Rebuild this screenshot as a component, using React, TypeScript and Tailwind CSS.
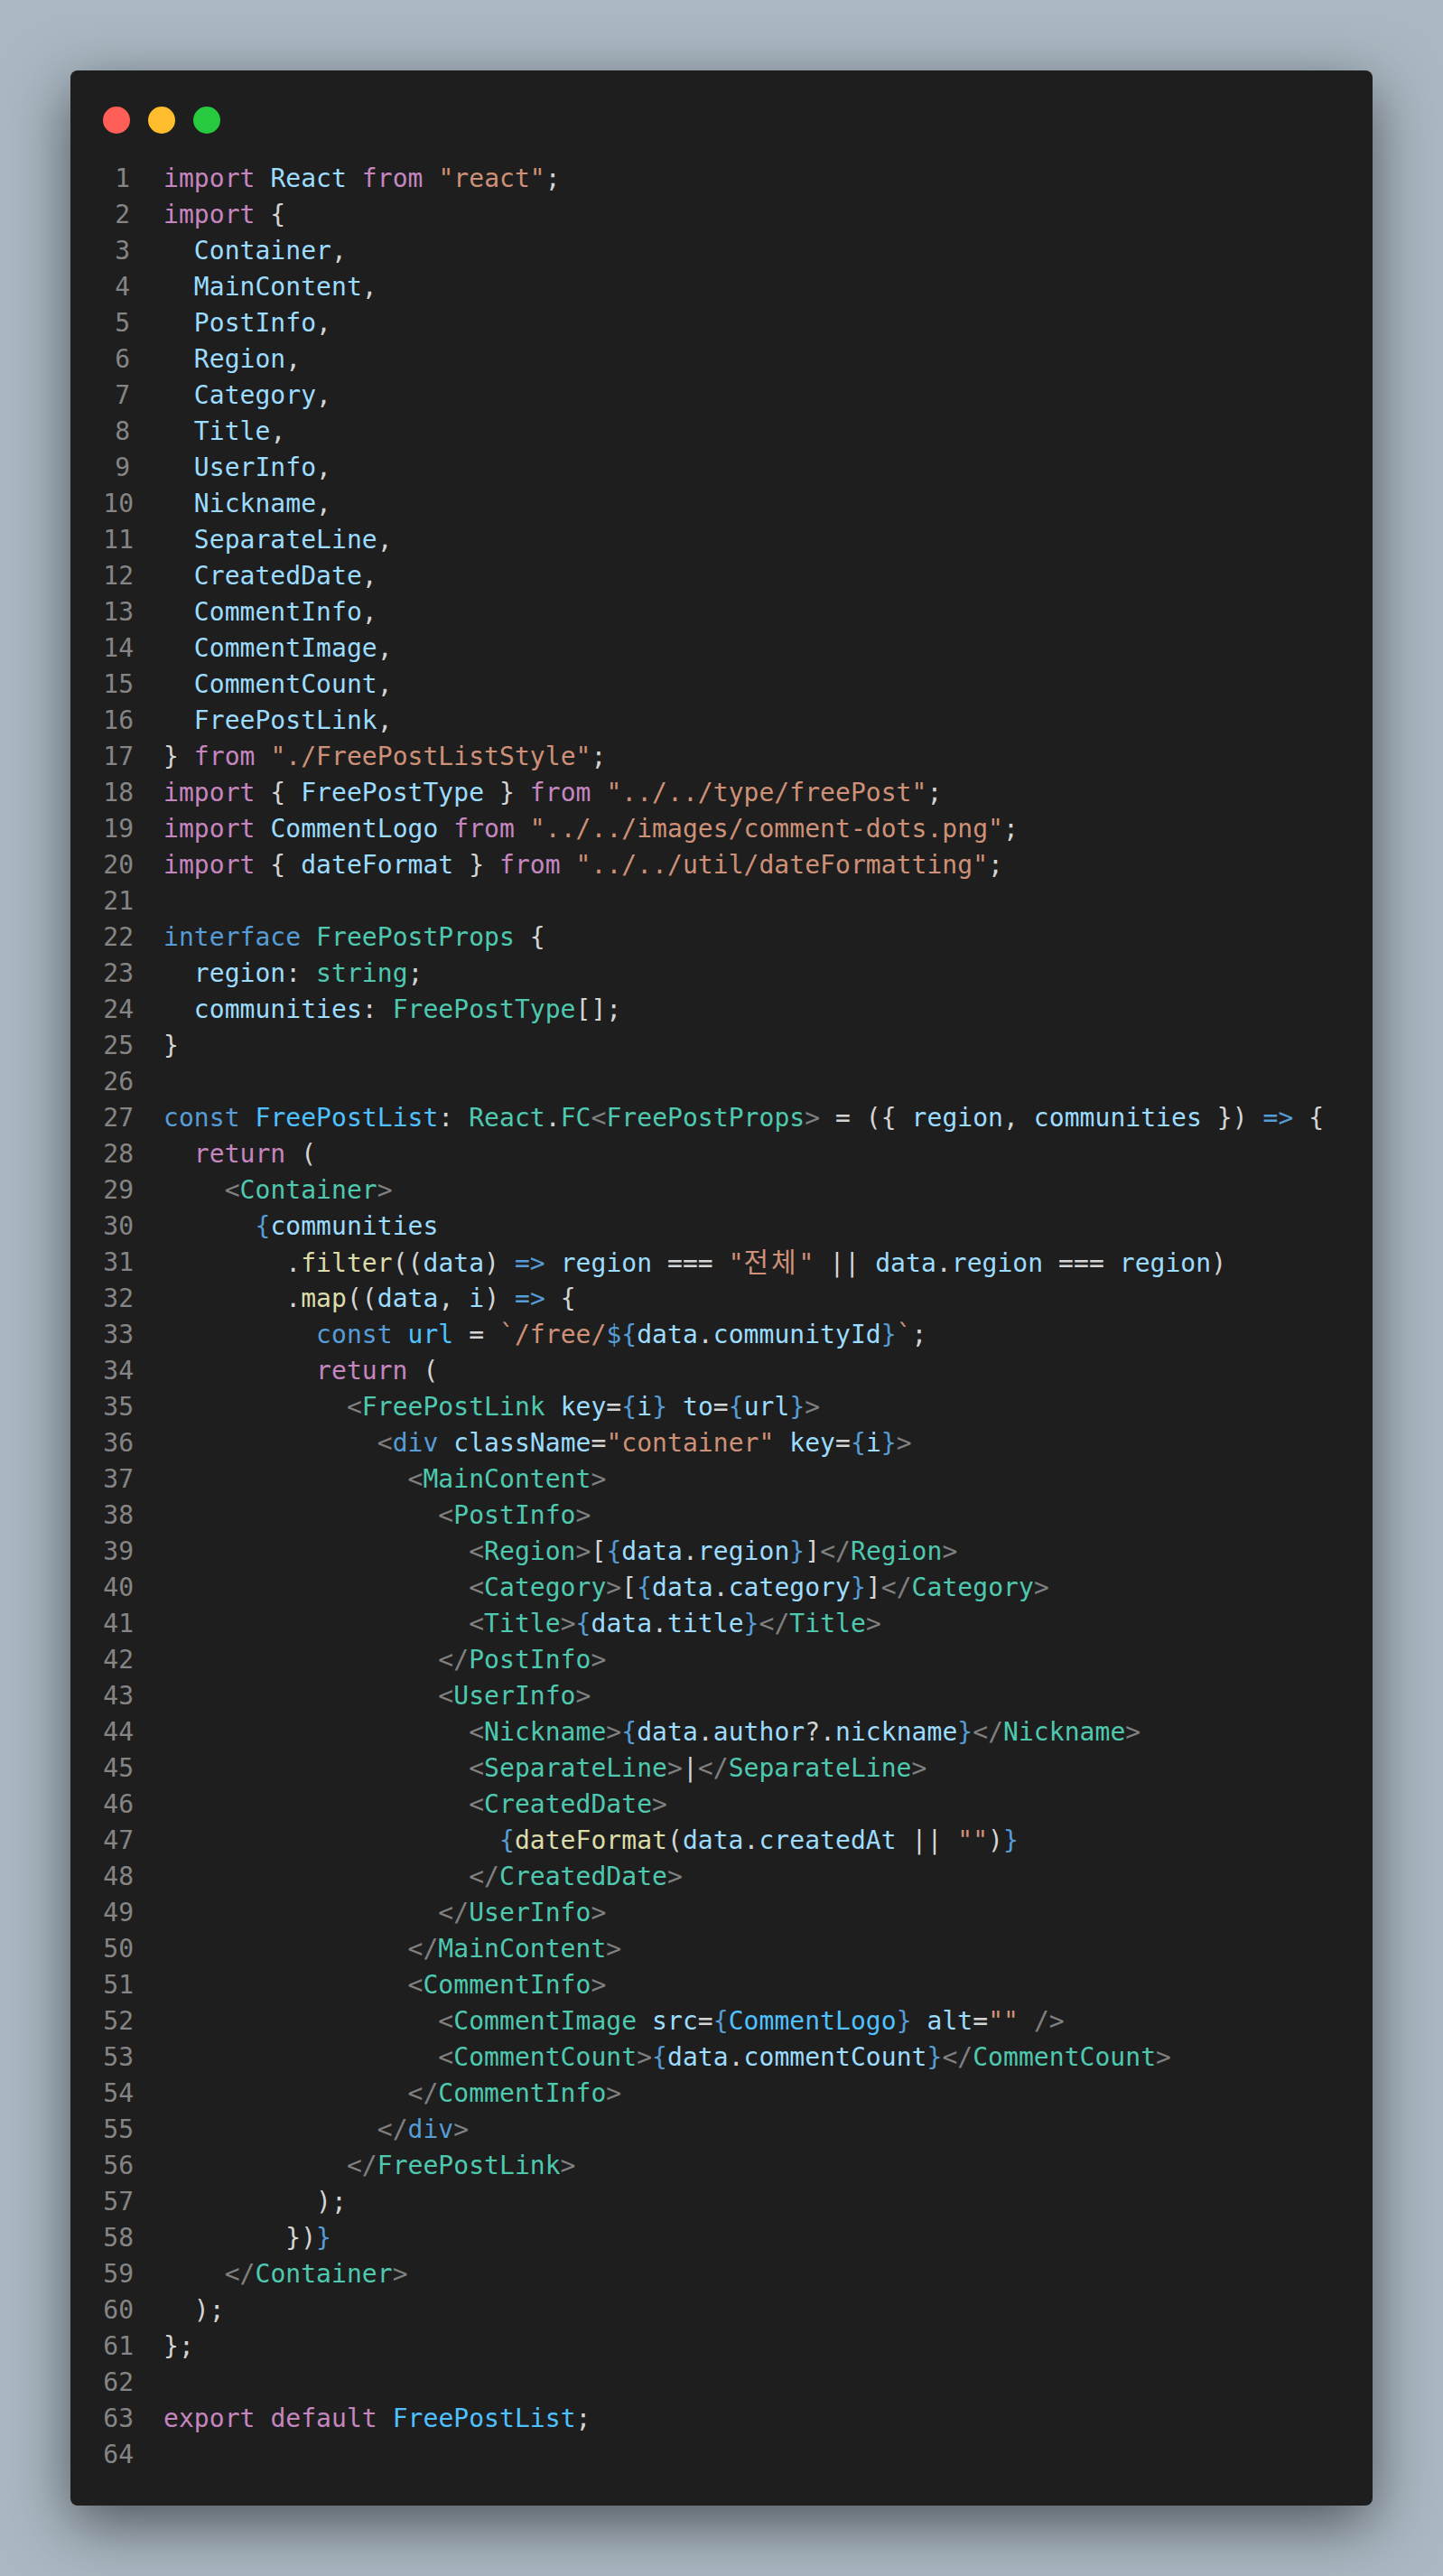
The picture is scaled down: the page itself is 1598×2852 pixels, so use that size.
import React from 'react';

type Tok = [keyof typeof colors, string];

const colors = {
  k: 'text-[#c586c0]',
  v: 'text-[#9cdcfe]',
  c: 'text-[#4fc1ff]',
  s: 'text-[#ce9178]',
  p: 'text-[#d4d4d4]',
  b: 'text-[#569cd6]',
  t: 'text-[#4ec9b0]',
  f: 'text-[#dcdcaa]',
  g: 'text-[#808080]',
  // hangul falls back to a wider face in the editor
  h: 'text-[#ce9178] text-[30px] tracking-[2.9px]',
};

// opening / closing jsx tags, the brackets are grey
const open = (name: string, kind: 'b' | 't' = 't'): Tok[] => [['g', '<'], [kind, name], ['g', '>']];
const close = (name: string, kind: 'b' | 't' = 't'): Tok[] => [['g', '</'], [kind, name], ['g', '>']];
const ind = (n: number): Tok => ['p', ' '.repeat(n)];
const field = (name: string): Tok[] => [ind(2), ['v', name], ['p', ',']];

const lines: Tok[][] = [
  [['k', 'import'], ['p', ' '], ['v', 'React'], ['p', ' '], ['k', 'from'], ['p', ' '], ['s', '"react"'], ['p', ';']],
  [['k', 'import'], ['p', ' {']],
  field('Container'),
  field('MainContent'),
  field('PostInfo'),
  field('Region'),
  field('Category'),
  field('Title'),
  field('UserInfo'),
  field('Nickname'),
  field('SeparateLine'),
  field('CreatedDate'),
  field('CommentInfo'),
  field('CommentImage'),
  field('CommentCount'),
  field('FreePostLink'),
  [['p', '} '], ['k', 'from'], ['p', ' '], ['s', '"./FreePostListStyle"'], ['p', ';']],
  [['k', 'import'], ['p', ' { '], ['v', 'FreePostType'], ['p', ' } '], ['k', 'from'], ['p', ' '], ['s', '"../../type/freePost"'], ['p', ';']],
  [['k', 'import'], ['p', ' '], ['v', 'CommentLogo'], ['p', ' '], ['k', 'from'], ['p', ' '], ['s', '"../../images/comment-dots.png"'], ['p', ';']],
  [['k', 'import'], ['p', ' { '], ['v', 'dateFormat'], ['p', ' } '], ['k', 'from'], ['p', ' '], ['s', '"../../util/dateFormatting"'], ['p', ';']],
  [],
  [['b', 'interface'], ['p', ' '], ['t', 'FreePostProps'], ['p', ' {']],
  [ind(2), ['v', 'region'], ['p', ': '], ['t', 'string'], ['p', ';']],
  [ind(2), ['v', 'communities'], ['p', ': '], ['t', 'FreePostType'], ['p', '[];']],
  [['p', '}']],
  [],
  [['b', 'const'], ['p', ' '], ['c', 'FreePostList'], ['p', ': '], ['t', 'React'], ['p', '.'], ['t', 'FC'], ['g', '<'], ['t', 'FreePostProps'], ['g', '>'], ['p', ' = ({ '], ['v', 'region'], ['p', ', '], ['v', 'communities'], ['p', ' }) '], ['b', '=>'], ['p', ' {']],
  [ind(2), ['k', 'return'], ['p', ' (']],
  [ind(4), ...open('Container')],
  [ind(6), ['b', '{'], ['v', 'communities']],
  [ind(8), ['p', '.'], ['f', 'filter'], ['p', '(('], ['v', 'data'], ['p', ') '], ['b', '=>'], ['p', ' '], ['v', 'region'], ['p', ' === '], ['s', '"'], ['h', '전체'], ['s', '"'], ['p', ' || '], ['v', 'data'], ['p', '.'], ['v', 'region'], ['p', ' === '], ['v', 'region'], ['p', ')']],
  [ind(8), ['p', '.'], ['f', 'map'], ['p', '(('], ['v', 'data'], ['p', ', '], ['v', 'i'], ['p', ') '], ['b', '=>'], ['p', ' {']],
  [ind(10), ['b', 'const'], ['p', ' '], ['c', 'url'], ['p', ' = '], ['s', '`/free/'], ['b', '${'], ['v', 'data'], ['p', '.'], ['v', 'communityId'], ['b', '}'], ['s', '`'], ['p', ';']],
  [ind(10), ['k', 'return'], ['p', ' (']],
  [ind(12), ['g', '<'], ['t', 'FreePostLink'], ['p', ' '], ['v', 'key'], ['p', '='], ['b', '{'], ['v', 'i'], ['b', '}'], ['p', ' '], ['v', 'to'], ['p', '='], ['b', '{'], ['v', 'url'], ['b', '}'], ['g', '>']],
  [ind(14), ['g', '<'], ['b', 'div'], ['p', ' '], ['v', 'className'], ['p', '='], ['s', '"container"'], ['p', ' '], ['v', 'key'], ['p', '='], ['b', '{'], ['v', 'i'], ['b', '}'], ['g', '>']],
  [ind(16), ...open('MainContent')],
  [ind(18), ...open('PostInfo')],
  [ind(20), ...open('Region'), ['p', '['], ['b', '{'], ['v', 'data'], ['p', '.'], ['v', 'region'], ['b', '}'], ['p', ']'], ...close('Region')],
  [ind(20), ...open('Category'), ['p', '['], ['b', '{'], ['v', 'data'], ['p', '.'], ['v', 'category'], ['b', '}'], ['p', ']'], ...close('Category')],
  [ind(20), ...open('Title'), ['b', '{'], ['v', 'data'], ['p', '.'], ['v', 'title'], ['b', '}'], ...close('Title')],
  [ind(18), ...close('PostInfo')],
  [ind(18), ...open('UserInfo')],
  [ind(20), ...open('Nickname'), ['b', '{'], ['v', 'data'], ['p', '.'], ['v', 'author'], ['p', '?.'], ['v', 'nickname'], ['b', '}'], ...close('Nickname')],
  [ind(20), ...open('SeparateLine'), ['p', '|'], ...close('SeparateLine')],
  [ind(20), ...open('CreatedDate')],
  [ind(22), ['b', '{'], ['f', 'dateFormat'], ['p', '('], ['v', 'data'], ['p', '.'], ['v', 'createdAt'], ['p', ' || '], ['s', '""'], ['p', ')'], ['b', '}']],
  [ind(20), ...close('CreatedDate')],
  [ind(18), ...close('UserInfo')],
  [ind(16), ...close('MainContent')],
  [ind(16), ...open('CommentInfo')],
  [ind(18), ['g', '<'], ['t', 'CommentImage'], ['p', ' '], ['v', 'src'], ['p', '='], ['b', '{'], ['c', 'CommentLogo'], ['b', '}'], ['p', ' '], ['v', 'alt'], ['p', '='], ['s', '""'], ['p', ' '], ['g', '/>']],
  [ind(18), ...open('CommentCount'), ['b', '{'], ['v', 'data'], ['p', '.'], ['v', 'commentCount'], ['b', '}'], ...close('CommentCount')],
  [ind(16), ...close('CommentInfo')],
  [ind(14), ...close('div', 'b')],
  [ind(12), ...close('FreePostLink')],
  [ind(10), ['p', ');']],
  [ind(8), ['p', '})'], ['b', '}']],
  [ind(4), ...close('Container')],
  [ind(2), ['p', ');']],
  [['p', '};']],
  [],
  [['k', 'export'], ['p', ' '], ['k', 'default'], ['p', ' '], ['c', 'FreePostList'], ['p', ';']],
  [],
];

const App: React.FC = () => {
  return (
    <div className="min-h-screen bg-[#abb8c3] p-[78px] font-['DejaVu_Sans_Mono','Noto_Sans_CJK_KR',monospace] text-[28px] leading-[40px]">
      <div className="rounded-lg bg-[#1e1e1e] pt-10 pb-9 pl-9 shadow-[0_20px_68px_rgba(0,0,0,0.55)]">
        <div className="mb-[30px] flex gap-5">
          <span className="h-[30px] w-[30px] rounded-full bg-[#ff5f56]"></span>
          <span className="h-[30px] w-[30px] rounded-full bg-[#ffbd2e]"></span>
          <span className="h-[30px] w-[30px] rounded-full bg-[#27c93f]"></span>
        </div>
        {lines.map((line, i) => (
          <div key={i} className="flex h-10 whitespace-pre">
            {/* single digit numbers sit a bit left of the tens column */}
            <span className={`w-[34px] text-right text-[#858585] ${i < 9 ? 'pr-1' : ''}`}>{i + 1}</span>
            <code className="ml-[33px] font-['DejaVu_Sans_Mono','Noto_Sans_CJK_KR',monospace] tracking-[0.05px]">
              {line.map(([kind, text], j) => (
                <span key={j} className={colors[kind]}>{text}</span>
              ))}
            </code>
          </div>
        ))}
      </div>
    </div>
  );
};

export default App;
